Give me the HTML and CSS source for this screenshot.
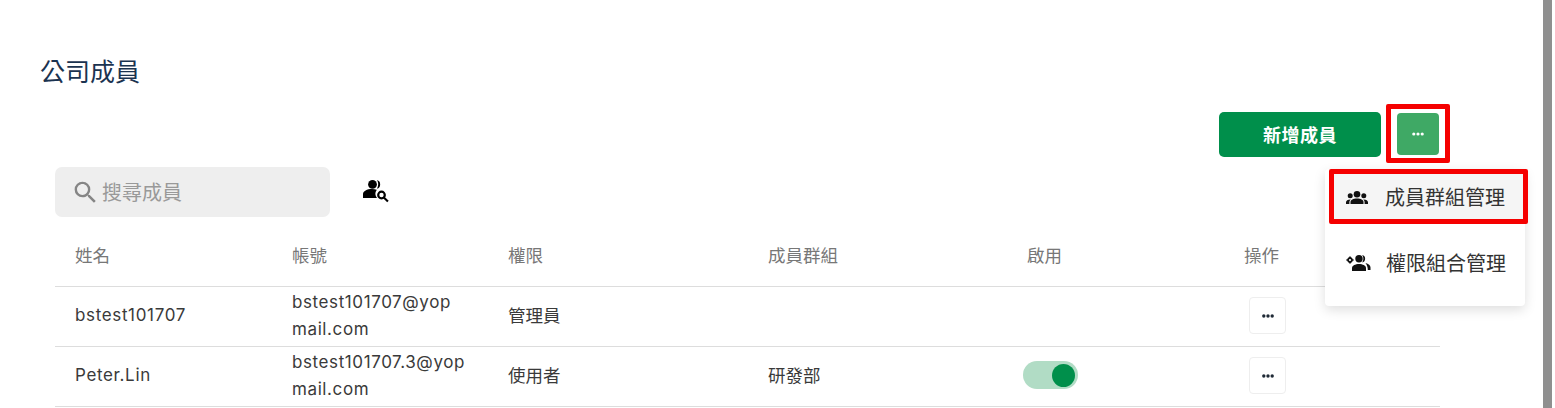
FILE: index.html
```html
<!DOCTYPE html>
<html lang="zh-Hant">
<head>
<meta charset="utf-8">
<title>公司成員</title>
<link rel="stylesheet" href="styles.css">
</head>
<body>
<div class="page">
  <main class="content">
    <h1 class="title">公司成員</h1>
    <div class="actions">
      <button class="btn-add">新增成員</button>
      <button class="btn-more"><svg width="14" height="4" viewBox="0 0 14 4"><circle cx="2.800" cy="2" r="1.600"/><circle cx="7" cy="2" r="1.600"/><circle cx="11.200" cy="2" r="1.600"/></svg></button>
      <div class="menu">
        <div class="menu-item hl">
          <svg class="menu-icon" width="22" height="13" viewBox="0 0 22 13"><circle cx="11" cy="3.300" r="3.300"/><circle cx="4.200" cy="4.800" r="2.500"/><circle cx="17.800" cy="4.800" r="2.500"/><path d="M4.500 13v-2c0-2.200 2.800-3.600 6.500-3.600s6.500 1.400 6.500 3.600v2z"/><path d="M0 13v-1.800c0-1.700 1.800-2.800 4.300-2.800.2 0 .3 0 .5.1-.9.700-1.400 1.600-1.400 2.700V13zM22 13v-1.800c0-1.700-1.800-2.800-4.300-2.800-.2 0-.3 0-.5.1.9.700 1.400 1.600 1.400 2.700V13z"/></svg>
          <span>成員群組管理</span>
        </div>
        <div class="menu-item">
          <svg class="menu-icon" width="24" height="16" viewBox="0 0 24 16"><circle cx="12" cy="3.700" r="3.700"/><path d="M15.200 0a3.800 3.800 0 0 1 0 7.400 7 7 0 0 0 0-7.400z"/><path d="M5 16v-3c0-2.400 3.400-4 7-4s7 1.600 7 4v3z"/><path d="M18.500 8c3 .7 5 2.300 5 4.500V15h-2.700c0-3-.8-5-2.300-7z"/><circle cx="3" cy="5" r="2" fill="none" stroke="#111" stroke-width="1.800"/><path d="M2.200 1.400h1.600v1.400H2.200zM2.200 7.200h1.600v1.400H2.200zM-.6 4.200H.8v1.600H-.6zM5.200 4.200h1.400v1.600H5.200z"/></svg>
          <span>權限組合管理</span>
        </div>
      </div>
    </div>
    <div class="toolbar">
      <div class="search">
        <svg width="29" height="29" viewBox="0 0 24 24" fill="#858585"><path d="M15.500 14h-.79l-.28-.27A6.470 6.470 0 0 0 16 9.500 6.500 6.500 0 1 0 9.500 16c1.610 0 3.090-.59 4.230-1.570l.27.28v.79l5 4.990L20.490 19l-4.990-5zm-6 0C7.010 14 5 11.990 5 9.500S7.010 5 9.500 5 14 7.010 14 9.500 11.990 14 9.500 14z"/></svg>
        <span class="placeholder">搜尋成員</span>
      </div>
      <svg class="filter" width="26" height="22" viewBox="0 0 26 22"><circle cx="9.500" cy="4.400" r="4.400"/><path d="M14 .1a4.500 4.500 0 0 1 0 8.600 8.500 8.500 0 0 0 0-8.600z"/><path d="M0 18v-3.800c0-3.200 4-5.200 9-5.200 1.800 0 3.400.2 4.800.7a7 7 0 0 0 .2 8.300z"/><circle cx="18.500" cy="15" r="3.300" fill="none" stroke="#000" stroke-width="2.200"/><path d="M21 16.300l4.700 4.500-1.500 1.500-4.600-4.600z"/></svg>
    </div>
    <div class="table">
      <div class="row head">
        <div class="cell">姓名</div><div class="cell">帳號</div><div class="cell">權限</div><div class="cell">成員群組</div><div class="cell">啟用</div><div class="cell">操作</div>
      </div>
      <div class="row">
        <div class="cell">bstest101707</div>
        <div class="cell mail">bstest101707@yop<br>mail.com</div>
        <div class="cell cjk">管理員</div>
        <div class="cell cjk"></div>
        <div class="cell"></div>
        <div class="cell"><button class="btn-op"><svg width="14" height="4" viewBox="0 0 14 4"><circle cx="2.800" cy="2" r="1.700"/><circle cx="7" cy="2" r="1.700"/><circle cx="11.200" cy="2" r="1.700"/></svg></button></div>
      </div>
      <div class="row">
        <div class="cell">Peter.Lin</div>
        <div class="cell mail">bstest101707.3@yop<br>mail.com</div>
        <div class="cell cjk">使用者</div>
        <div class="cell cjk">研發部</div>
        <div class="cell"><span class="switch"><span class="knob"></span></span></div>
        <div class="cell"><button class="btn-op"><svg width="14" height="4" viewBox="0 0 14 4"><circle cx="2.800" cy="2" r="1.700"/><circle cx="7" cy="2" r="1.700"/><circle cx="11.200" cy="2" r="1.700"/></svg></button></div>
      </div>
    </div>
  </main>
  <div class="scrollbar"></div>
</div>
</body>
</html>
```
FILE: styles.css
```css
* { box-sizing: border-box; }
html, body { margin: 0; height: 408px; overflow: hidden; background: #fff; }
body { font-family: "Inter", "Noto Sans CJK TC", sans-serif; color: #3a3a3a; }
.page { display: flex; width: 1555px; height: 408px; }
.content { width: 1543px; padding: 55px 103px 0 55px; flex: none; }
.scrollbar { width: 9px; background: #8f8f8f; flex: none; }
.title { margin: 0 0 0 -15px; font: 400 25px/30px "Noto Sans CJK TC", sans-serif; color: #1b3350; }
.actions { position: relative; display: flex; justify-content: flex-end; align-items: center; gap: 16px; margin-top: 27px; height: 45px; }
.btn-add { width: 162px; height: 45px; padding: 0 0 2px; border: 0; border-radius: 5px; background: #008f4b; color: #fff; font: 700 18px/1 "Noto Sans CJK TC", sans-serif; letter-spacing: .5px; }
.btn-more { position: relative; width: 42px; height: 42px; margin: 0 1px 2px 0; padding: 0; border: 0; border-radius: 4px; background: #3fa965; display: flex; align-items: center; justify-content: center; }
.btn-more::after { content: ""; position: absolute; inset: -9px -11px -8px -11px; border: 5px solid #f50000; border-radius: 2px; }
.btn-more svg { fill: #fff; }
.menu { position: absolute; z-index: 2; top: 57px; right: -85px; width: 200px; background: #fff; border-radius: 4px; box-shadow: 0 4px 12px rgba(0,0,0,.13); }
.menu-item { height: 74px; margin-top: 8px; display: flex; align-items: center; gap: 15px; padding: 0 0 12px 22px; font: 400 20px/1 "Noto Sans CJK TC", sans-serif; color: #333; }
.menu-item.hl { height: 55px; margin: 0 -3px 0 4px; width: 199px; padding: 1px 0 0 12px; background: #f5f5f5; border: 5px solid #f50000; border-radius: 2px; gap: 17px; }
.menu-icon { flex: none; fill: #111; overflow: visible; }
.toolbar { display: flex; align-items: center; gap: 33px; margin-top: 10px; height: 50px; }
.search { width: 275px; height: 50px; background: #eee; border-radius: 7px; display: flex; align-items: center; gap: 2px; padding-left: 16px; }
.placeholder { font: 400 20px/1 "Noto Sans CJK TC", sans-serif; color: #999; }
.filter { fill: #000; margin-top: -2px; overflow: visible; }
.table { margin-top: 10px; }
.row { display: grid; grid-template-columns: 217px 216px 260px 259px 217px 216px; height: 60px; border-bottom: 1px solid #ddd; font-size: 17px; line-height: 27px; letter-spacing: .65px; }
.head { color: #777; font: 400 17.5px/24px "Noto Sans CJK TC", sans-serif; letter-spacing: 0; }
.cell { display: flex; align-items: center; padding: 0 0 2px 20px; }
.head .cell { align-items: flex-start; padding-top: 16px; }
.mail { display: block; padding-top: 2px; letter-spacing: .6px; }
.cjk { padding-bottom: 4px; font: 400 17.5px/1 "Noto Sans CJK TC", sans-serif; letter-spacing: 0; }
.switch { display: flex; align-items: center; justify-content: flex-end; width: 55px; height: 28px; padding-right: 3px; border-radius: 14px; background: #b1dcc5; margin: 0 0 1px -4px; }
.knob { width: 23px; height: 23px; border-radius: 50%; background: #008f4b; }
.btn-op { width: 37px; height: 37px; margin-left: 5px; padding: 0; background: #fff; border: 1px solid #eee; border-radius: 4px; display: flex; align-items: center; justify-content: center; }
.btn-op svg { fill: #1f2a36; }
```
